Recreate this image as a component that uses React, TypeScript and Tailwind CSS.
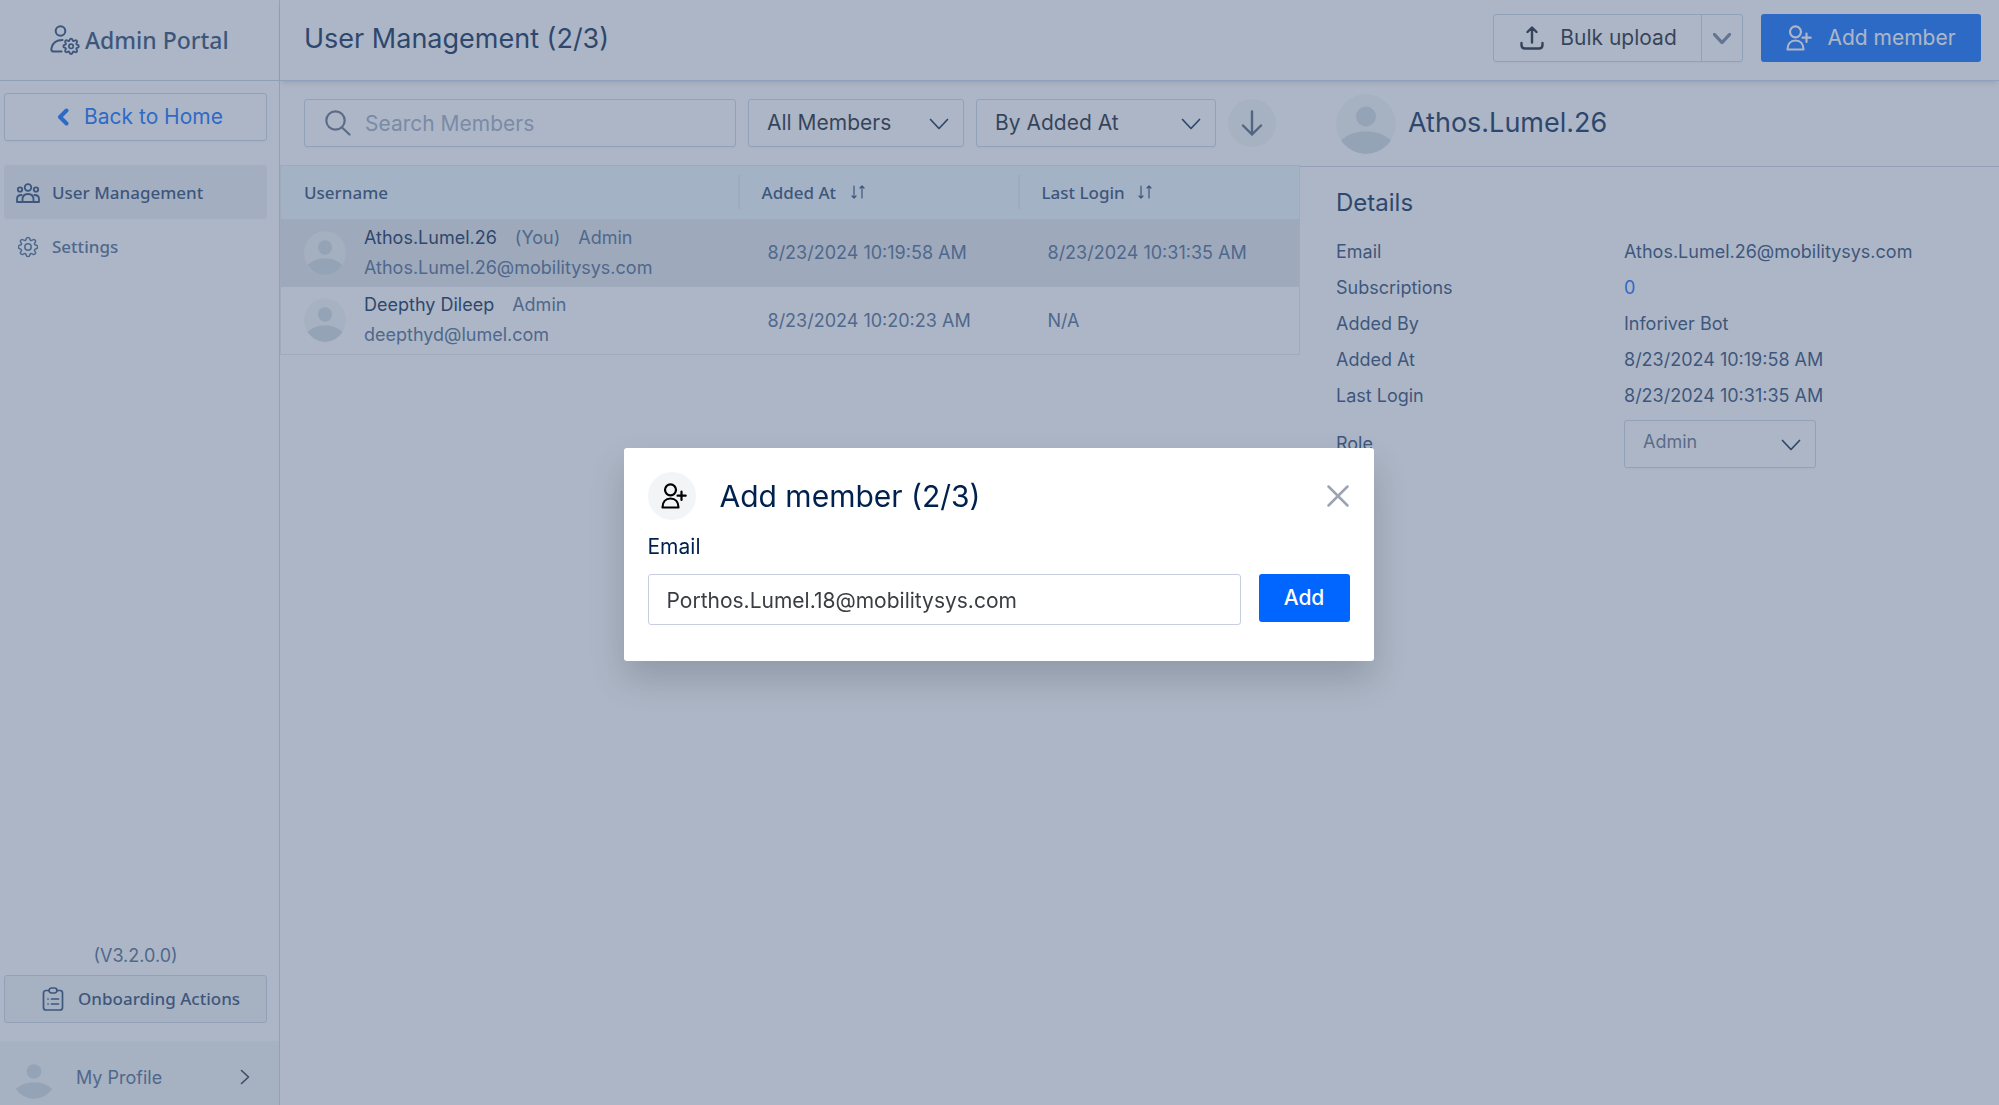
import { useState, type ReactNode } from 'react';

const MEMBERS = [
  {
    name: 'Athos.Lumel.26',
    you: true,
    role: 'Admin',
    email: 'Athos.Lumel.26@mobilitysys.com',
    addedAt: '8/23/2024 10:19:58 AM',
    lastLogin: '8/23/2024 10:31:35 AM',
  },
  {
    name: 'Deepthy Dileep',
    you: false,
    role: 'Admin',
    email: 'deepthyd@lumel.com',
    addedAt: '8/23/2024 10:20:23 AM',
    lastLogin: 'N/A',
  },
];

const DETAILS = [
  { label: 'Email', value: 'Athos.Lumel.26@mobilitysys.com' },
  { label: 'Subscriptions', value: '0', link: true },
  { label: 'Added By', value: 'Inforiver Bot' },
  { label: 'Added At', value: '8/23/2024 10:19:58 AM' },
  { label: 'Last Login', value: '8/23/2024 10:31:35 AM' },
];

const GEAR =
  'M10.3 2.6a1.8 1.8 0 0 1 3.4 0l.4 1.2c.2.6.9.9 1.5.6l1.1-.6a1.8 1.8 0 0 1 2.5 2.5l-.6 1.1c-.3.6 0 1.3.6 1.5l1.2.4a1.8 1.8 0 0 1 0 3.4l-1.2.4c-.6.2-.9.9-.6 1.5l.6 1.1a1.8 1.8 0 0 1-2.5 2.5l-1.1-.6c-.6-.3-1.3 0-1.5.6l-.4 1.2a1.8 1.8 0 0 1-3.4 0l-.4-1.2c-.2-.6-.9-.9-1.5-.6l-1.1.6a1.8 1.8 0 0 1-2.5-2.5l.6-1.1c.3-.6 0-1.3-.6-1.5l-1.2-.4a1.8 1.8 0 0 1 0-3.4l1.2-.4c.6-.2.9-.9.6-1.5l-.6-1.1a1.8 1.8 0 0 1 2.5-2.5l1.1.6c.6.3 1.3 0 1.5-.6z';

const Icon = ({ className, box = '0 0 24 24', width = 1.5, children }: {
  className: string;
  box?: string;
  width?: number;
  children: ReactNode;
}) => (
  <svg
    className={`shrink-0 ${className}`}
    viewBox={box}
    fill="none"
    stroke="currentColor"
    strokeWidth={width}
    strokeLinecap="round"
    strokeLinejoin="round"
    aria-hidden="true"
  >
    {children}
  </svg>
);

const Chevron = ({ className, width = 1.7 }: { className: string; width?: number }) => (
  <Icon className={className} box="0 0 20 12" width={width}>
    <path d="M1.5 1.5 10 10.5l8.5-9" />
  </Icon>
);

const GearIcon = ({ className }: { className: string }) => (
  <Icon className={className} box="2 0 20 22">
    <path d={GEAR} />
    <circle cx="12" cy="11" r="3.2" />
  </Icon>
);

const AddUserIcon = ({ className }: { className: string }) => (
  <Icon className={className} box="0 0 26 26" width={2.2}>
    <circle cx="9.5" cy="6.8" r="5.5" />
    <path d="M1.5 24.5c0-5.5 3.2-9 8-9s8 3.5 8 9z" />
    <path d="M20.5 8.5v8.5M16.5 12.7h8.2" />
  </Icon>
);

const Avatar = ({ className, fill = '#f3f4f6' }: { className: string; fill?: string }) => (
  <svg className={`shrink-0 rounded-full ${className}`} viewBox="0 0 60 60" preserveAspectRatio="none" aria-hidden="true">
    <circle cx="30" cy="30" r="30" fill={fill} />
    <circle cx="30" cy="22.5" r="10" fill="#d1d9e0" />
    <path d="M5 46.5C12 40 20 37.5 30 37.5S48 40 55 46.5A30 30 0 0 1 5 46.5z" fill="#d1d9e0" />
  </svg>
);

const SortIcon = () => (
  <Icon className="h-3.5 w-4" box="0 0 16 14" width={1.2}>
    <path d="M4 1v12M2 11l2 2 2-2M12 13V1M10 3l2-2 2 2" />
  </Icon>
);

const Sidebar = () => (
  <aside className="flex w-[280px] shrink-0 flex-col border-r border-[#cbd5e1] text-[#1f3f6b]">
    <div className="flex h-[81px] items-center border-b border-[#c7d0e3] pl-[50px]">
      <Icon className="size-[30px]" box="0 0 30 30" width={2}>
        <circle cx="10.5" cy="6" r="4.8" />
        <path d="M11.5 26.5H3.5C1.5 26.5 1 25 1.5 23 2.5 18.5 6 15 12.5 15" />
        <path d={GEAR} transform="translate(11.5 12.5) scale(.8)" strokeWidth="2.3" />
        <circle cx="21.1" cy="21.3" r="2.2" strokeWidth="1.7" />
      </Icon>
      <span className="ml-[5px] font-['Noto_Sans'] text-[23px] font-medium">Admin Portal</span>
    </div>
    <nav className="flex flex-col px-1 pt-3 pr-3">
      <a href="#home" className="mb-6 flex h-12 items-center rounded-[3px] border border-[#c9d4e2] pl-[52px] text-[21px] text-[#0066ff] shadow-xs">
        <Icon className="mr-[15px] h-[18px] w-3" box="0 0 12 18" width={4}>
          <path d="M9.5 2.5 3 9l6.5 6.5" />
        </Icon>
        Back to Home
      </a>
      <a href="#users" className="flex h-[54px] items-center rounded-[3px] bg-[#ecf0f3] pt-0.5 pl-3 font-['Noto_Sans'] text-[17px] font-medium">
        <Icon className="mr-3 h-[22px] w-6" box="0 0 24 20" width={1.8}>
          <circle cx="12" cy="4.5" r="3.3" />
          <circle cx="4" cy="6.5" r="2.2" />
          <circle cx="20" cy="6.5" r="2.2" />
          <path d="M6.5 19v-2.5c0-3.5 2-5.5 5.5-5.5s5.5 2 5.5 5.5V19zM6.5 19H1v-3c0-2.5 1.5-4 4.5-4M17.5 19H23v-3c0-2.5-1.5-4-4.5-4" />
        </Icon>
        User Management
      </a>
      <a href="#settings" className="flex h-[54px] items-center rounded-[3px] pt-0.5 pl-3.5 font-['Noto_Sans'] text-[17px] font-medium text-[#45628a]">
        <GearIcon className="mr-3.5 h-[22px] w-5" />
        Settings
      </a>
    </nav>
    <div className="mt-auto pr-3 pl-1">
      <p className="text-center text-[18px] leading-[38px] text-[#45628a]">(V3.2.0.0)</p>
      <button type="button" className="flex h-12 w-full items-center rounded-[3px] border border-[#cbd5e1] bg-[#f3f4f6] pl-[37px] font-['Noto_Sans'] text-[17px] font-medium">
        <Icon className="mr-3.5 h-6 w-[22px]" box="0 0 22 24" width={1.7}>
          <path d="M7 3.5H4A2.5 2.5 0 0 0 1.5 6v14.500A2.5 2.5 0 0 0 4 23h14a2.5 2.5 0 0 0 2.5-2.5V6A2.5 2.5 0 0 0 18 3.5h-3" />
          <rect x="7" y="1" width="8" height="5" rx="2.5" />
          <path d="M6 12h.1M6 17h.1M9.5 12h7M9.5 17h7" />
        </Icon>
        Onboarding Actions
      </button>
    </div>
    <button type="button" className="mt-[18px] flex h-16 items-center bg-[#f3f4f6] pt-2 pr-[29px] pl-3 text-[18px] text-[#45628a]">
      <Avatar className="mr-5 size-11" />
      My Profile
      <Icon className="ml-auto h-4 w-2.5 text-[#1f2937]" box="0 0 10 16" width={1.6}>
        <path d="M1.5 1.5 8.5 8l-7 6.5" />
      </Icon>
    </button>
  </aside>
);

const Header = ({ onAdd }: { onAdd: () => void }) => (
  <header className="relative flex h-[81px] items-center border-b border-[#c7d0e8] pr-[18px] pb-1 pl-6 shadow-md">
    <h1 className="pt-0.5 text-[27px] text-[#00204d]">User Management (2/3)</h1>
    <div className="ml-auto flex h-12 items-stretch rounded-[3px] border border-[#c9d4e2] text-[#111827] shadow-xs">
      <button type="button" className="flex w-[207px] items-center justify-center gap-4 pl-0.5 text-[21px]">
        <Icon className="size-6" width={2.4}>
          <path d="M12 16.5V2M7.5 6 12 1.500 16.500 6M1.500 17v2c0 2.500 1 3.500 3.500 3.500h14c2.500 0 3.500-1 3.500-3.500v-2" />
        </Icon>
        Bulk upload
      </button>
      <button type="button" aria-label="More upload options" className="flex w-[41px] items-center justify-center border-l border-[#c9d4e2] text-[#6b7a94]">
        <Chevron className="h-[11px] w-[18px]" width={3.5} />
      </button>
    </div>
    <button type="button" onClick={onAdd} className="ml-[18px] flex h-12 w-[220px] items-center justify-center gap-[15px] rounded-[3px] bg-[#0066ff] text-[21px] text-white">
      <AddUserIcon className="size-[26px]" />
      Add member
    </button>
  </header>
);

const Select = ({ label, value, width, className = '' }: {
  label: string;
  value: string;
  width: string;
  className?: string;
}) => (
  <div className={`grid shrink-0 items-center ${width}`}>
    <select
      aria-label={label}
      defaultValue={value}
      className={`col-start-1 row-start-1 h-12 w-full appearance-none rounded-[3px] border border-[#c9d4e2] pl-[18px] shadow-xs ${className}`}
    >
      <option>{value}</option>
    </select>
    <Chevron className="pointer-events-none col-start-1 row-start-1 mt-0.5 mr-[15px] h-3 w-5 justify-self-end text-[#00204d]" />
  </div>
);

const MemberList = () => (
  <section className="w-[1020px] shrink-0">
    <div className="flex items-center gap-3 py-[18px] pl-6">
      <label className="flex h-12 w-[432px] items-center rounded-[3px] border border-[#c9d4e2] pl-5 shadow-xs">
        <Icon className="size-[26px] text-[#5d6b82]" box="0 0 26 26" width={2.2}>
          <circle cx="10.5" cy="10.5" r="9.2" />
          <path d="m17 17.5 7.5 7" />
        </Icon>
        <input
          type="search"
          aria-label="Search Members"
          placeholder="Search Members"
          className="ml-3.5 min-w-0 flex-1 pt-0.5 text-[21px] outline-none placeholder:text-[#9aa8c0]"
        />
      </label>
      <Select label="Member filter" value="All Members" width="w-[216px]" className="text-[21px] text-[#111827]" />
      <Select label="Sort by" value="By Added At" width="w-[240px]" className="text-[21px] text-[#111827]" />
      <button type="button" aria-label="Sort descending" className="flex size-12 items-center justify-center rounded-full bg-[#f3f4f6] text-[#4b5c78]">
        <Icon className="h-[26px] w-[22px]" box="0 0 22 26" width={2.4}>
          <path d="M11 1.5v23M2 15.5l9 9 9-9" />
        </Icon>
      </button>
    </div>
    <table className="w-full table-fixed border-collapse border border-[#e5e7eb] text-left text-[18px] text-[#45628a]">
      <colgroup>
        <col className="w-[457px]" />
        <col className="w-[280px]" />
        <col />
      </colgroup>
      <thead className="bg-[#eff6fc] font-['Noto_Sans'] text-[17px] text-[#1f3f6b]">
        <tr className="h-[53px]">
          <th className="pl-[23px] font-medium">Username</th>
          <th className="font-medium">
            <span className="flex h-[34px] items-center gap-3.5 border-l-2 border-[#e5e7eb] pl-[22px]">Added At <SortIcon /></span>
          </th>
          <th className="font-medium">
            <span className="flex h-[34px] items-center gap-3 border-l-2 border-[#e5e7eb] pl-[22px]">Last Login <SortIcon /></span>
          </th>
        </tr>
      </thead>
      <tbody>
        {MEMBERS.map((m) => (
          <tr key={m.email} className={`h-[68px] ${m.you ? 'bg-[#e2e5e8]' : ''}`}>
            <td className="pl-[23px]">
              <div className="flex items-center gap-[18px]">
                <Avatar className="h-11 w-[42px]" fill={m.you ? '#eff1f3' : '#f3f4f6'} />
                <div className="leading-[30px]">
                  <div className="flex gap-[18px]">
                    <span className="text-[#00204d]">{m.name}</span>
                    {m.you && <span>(You)</span>}
                    <span>{m.role}</span>
                  </div>
                  <div>{m.email}</div>
                </div>
              </div>
            </td>
            <td className="pl-[30px]">{m.addedAt}</td>
            <td className="pl-[30px]">{m.lastLogin}</td>
          </tr>
        ))}
      </tbody>
    </table>
  </section>
);

const MemberDetails = () => (
  <section className="min-w-0 flex-1 text-[#1f3f6b]">
    <div className="flex h-[86px] items-center gap-3 border-b border-[#cbd5e1] pl-9">
      <Avatar className="size-[60px]" />
      <h2 className="text-[27px] text-[#00204d]">Athos.Lumel.26</h2>
    </div>
    <div className="pt-[18px] pl-9">
      <h3 className="mb-[13px] text-[24px] leading-9 text-[#00204d]">Details</h3>
      <dl className="grid grid-cols-[288px_1fr] text-[18px] leading-9">
        {DETAILS.map((d) => (
          <div key={d.label} className="contents">
            <dt>{d.label}</dt>
            <dd>{d.link ? <a href="#subscriptions" className="text-[#0066ff]">{d.value}</a> : d.value}</dd>
          </div>
        ))}
        <dt className="leading-[60px]">Role</dt>
        <dd className="pt-1.5">
          <Select label="Role" value="Admin" width="w-[192px]" className="pb-1 text-[18px] text-[#5b6b84]" />
        </dd>
      </dl>
    </div>
  </section>
);

const AddMemberDialog = ({ onClose }: { onClose: () => void }) => {
  const [email, setEmail] = useState('Porthos.Lumel.18@mobilitysys.com');

  return (
    <div className="fixed inset-0 flex items-center justify-center bg-[#5a6d8e]/50 pt-1 pr-0.5">
      <div
        role="dialog"
        aria-labelledby="add-member-title"
        className="w-[750px] rounded-[3px] bg-white px-6 pt-6 pb-9 text-[#00204d] shadow-[0_18px_36px_rgba(0,0,0,0.16)]"
      >
        <div className="flex items-center">
          <span className="flex size-12 items-center justify-center rounded-full bg-[#f3f4f6] text-black">
            <AddUserIcon className="ml-1 size-[26px]" />
          </span>
          <h2 id="add-member-title" className="ml-6 text-[30px]">Add member (2/3)</h2>
          <button type="button" aria-label="Close" onClick={onClose} className="ml-auto text-[#9ca3b4]">
            <Icon className="size-6" width={2.5}>
              <path d="m2.5 2.5 19 19M21.5 2.5l-19 19" />
            </Icon>
          </button>
        </div>
        <label htmlFor="member-email" className="mt-3 mb-3 block text-[21px] leading-[30px]">Email</label>
        <div className="flex items-start gap-[18px]">
          <input
            id="member-email"
            type="email"
            value={email}
            onChange={(e) => setEmail(e.target.value)}
            className="h-[51px] min-w-0 flex-1 rounded-[3px] border border-[#c7cede] px-[18px] pt-0.5 text-[21px] text-[#3a3d42] outline-none"
          />
          <button type="button" className="h-12 w-[91px] rounded-[3px] bg-[#0066ff] text-[21px] font-medium text-white">Add</button>
        </div>
      </div>
    </div>
  );
};

const App = () => {
  const [adding, setAdding] = useState(true);

  return (
    <div className="flex h-screen overflow-hidden bg-white font-[Inter,sans-serif]">
      <Sidebar />
      <main className="flex min-w-0 flex-1 flex-col">
        <Header onAdd={() => setAdding(true)} />
        <div className="flex min-h-0 flex-1">
          <MemberList />
          <MemberDetails />
        </div>
      </main>
      {adding && <AddMemberDialog onClose={() => setAdding(false)} />}
    </div>
  );
};

export default App;
